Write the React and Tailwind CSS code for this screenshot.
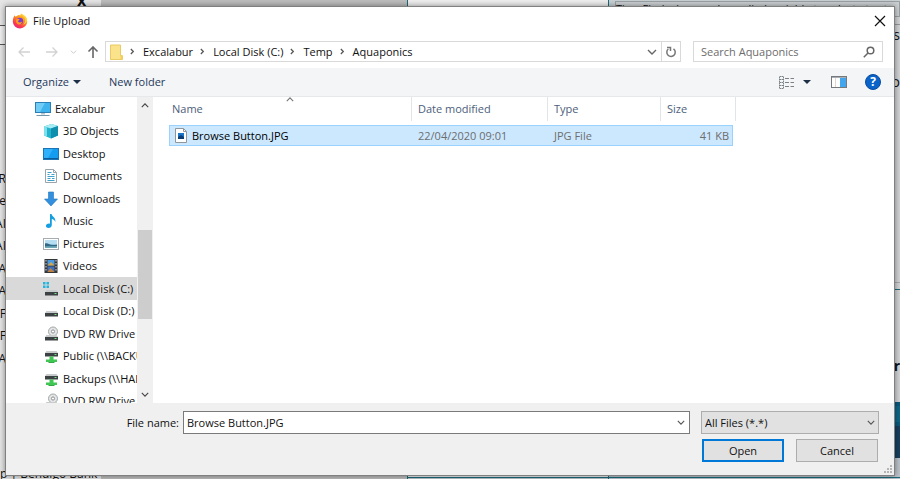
import { useState } from 'react';

const places = [
    { label: '3D Objects', icon: ObjectsIcon },
    { label: 'Desktop', icon: DesktopIcon },
    { label: 'Documents', icon: DocumentsIcon },
    { label: 'Downloads', icon: DownloadsIcon },
    { label: 'Music', icon: MusicIcon },
    { label: 'Pictures', icon: PicturesIcon },
    { label: 'Videos', icon: VideosIcon },
    { label: 'Local Disk (C:)', icon: SystemDiskIcon },
    { label: 'Local Disk (D:)', icon: DiskIcon },
    { label: 'DVD RW Drive (E:)', icon: DvdIcon },
    { label: 'Public (\\\\BACKUP)', icon: NetworkDriveIcon },
    { label: 'Backups (\\\\HAL)', icon: NetworkDriveIcon },
    { label: 'DVD RW Drive (F:)', icon: DvdIcon },
];

const crumbs = ['Excalabur', 'Local Disk (C:)', 'Temp', 'Aquaponics'];

const pageRows = ['R', 'e', 'AI', 'AI', 'A', 'A', 'AF', 'AF', 'A'];

function FirefoxIcon() {
    return (
        <svg viewBox="0 0 16 16" className="w-4 h-4">
            <defs>
                <linearGradient id="fox" x1="0.8" y1="0" x2="0.2" y2="1">
                    <stop offset="0" stopColor="#ffe03a" />
                    <stop offset="0.4" stopColor="#ff8a1c" />
                    <stop offset="0.75" stopColor="#fb3850" />
                    <stop offset="1" stopColor="#e0208a" />
                </linearGradient>
            </defs>
            <path d="M1.6 4.2 2.6 2.2l.8 1.5 1.5-.7C6 1.6 7.5 1.8 8.300 2.500L9 .5c1 .6 1.800 1.400 2.300 2.500l.5-.6c2 1.300 3.400 3.200 3.400 5.800a7.200 7.200 0 0 1-14.400.2c0-1.500.2-3 .8-4.200z" fill="url(#fox)" />
            <circle cx="7.800" cy="8" r="3.300" fill="#7a3bd0" />
            <path d="M4.200 6.200c1.200-.8 2.800-.5 3.600.3-.4.900-1.600.8-1.800 1.700.6 1.800 3.400 1.300 4.200.1-.1 2.400-2 3.500-3.700 3.100-2.200-.5-3.100-3.200-2.300-5.200z" fill="#ff9a1f" />
            <path d="M9.200.7c.5 2.200 3.600 2.600 4 6.300.1 2-1 4-2.400 4.800 3-.6 4.400-2.800 4.200-5.200C14.700 3.800 12 1.900 9.200.7z" fill="#ffd23a" />
        </svg>
    );
}

function Chevron({ className, d = 'M1 1l4 4 4-4' }) {
    return (
        <svg viewBox="0 0 10 6" className={className} fill="none" stroke="currentColor" strokeWidth="1.400">
            <path d={d} />
        </svg>
    );
}

function Arrow({ className, d, strokeWidth = 1.3 }) {
    return (
        <svg viewBox="0 0 12 12" className={className} fill="none" stroke="currentColor" strokeWidth={strokeWidth}>
            <path d={d} />
        </svg>
    );
}

function FolderIcon() {
    return (
        <svg viewBox="0 0 13 16" className="w-[13px] h-4">
            <path d="M.5 1h10v10.500l2 .5v3.500H.5z" fill="#fbe38b" stroke="#e9ca63" />
            <path d="M10.500 11v4.500h2V11z" fill="#f3cf5c" />
        </svg>
    );
}

function ComputerIcon() {
    return (
        <svg viewBox="0 0 16 16" className="w-4 h-4">
            <rect x=".5" y="1.500" width="15" height="10" fill="#3fb4ee" stroke="#2a7fb5" />
            <path d="M1 2h9L5 11H1z" fill="#72cdf6" />
            <path d="M6 12h4v1.500H6z" fill="#b5c5cf" />
            <path d="M1.500 14.500h13" stroke="#7295a8" />
        </svg>
    );
}

function ObjectsIcon() {
    return (
        <svg viewBox="0 0 16 16" className="w-4 h-4">
            <path d="M1 3.500 8.500 1 15 3v9.500L8 15.500l-7-3z" fill="#22b4cd" />
            <path d="M1 3.500 8.500 1 15 3 8 5.500z" fill="#a8ecf4" />
            <path d="M8 5.500 15 3v9.500l-7 3z" fill="#0f8fae" />
            <path d="M1 3.500l3 1v9.300l-3-1.300z" fill="#7fdfec" />
        </svg>
    );
}

function DesktopIcon() {
    return (
        <svg viewBox="0 0 16 16" className="w-4 h-4">
            <rect x=".5" y="2.500" width="15" height="11" fill="#149df0" stroke="#1b74b5" />
            <path d="M1 12.500h14" stroke="#0b5b99" />
            <path d="M1 3h9l-5 9H1z" fill="#2fb0fa" />
        </svg>
    );
}

function DocumentsIcon() {
    return (
        <svg viewBox="0 0 16 16" className="w-4 h-4">
            <path d="M2.500 1.500h8l3 3v10h-11z" fill="#fff" stroke="#9aa4aa" />
            <path d="M10.500 1.500v3h3" fill="none" stroke="#9aa4aa" />
            <path d="M4.500 4.500h4M4.500 6.500h2m2 0h3M4.500 8.500h7M4.500 10.500h3m1.500 0h2.500M4.500 12.500h7" stroke="#3fa0cc" />
        </svg>
    );
}

function DownloadsIcon() {
    return (
        <svg viewBox="0 0 16 16" className="w-4 h-4">
            <path d="M5.500 1h5v7h4L8 15 1.500 8h4z" fill="#3390df" stroke="#2374bd" strokeWidth=".6" />
        </svg>
    );
}

function MusicIcon() {
    return (
        <svg viewBox="0 0 16 16" className="w-4 h-4">
            <path d="M7 1h1.600c.3 2.700 4.400 3.300 3.800 8-.7-1.600-2-2.600-3.600-2.900V12c0 1.800-1.500 3-3.300 3S2.700 14 3 12.600C3.300 11 5.300 10.200 7 10.800z" fill="#169fe0" />
        </svg>
    );
}

function PicturesIcon() {
    return (
        <svg viewBox="0 0 16 16" className="w-4 h-4">
            <rect x=".5" y="2.500" width="15" height="11" fill="#fff" stroke="#a3adb3" />
            <rect x="2" y="4" width="12" height="8" fill="#b5def3" />
            <path d="M2 7.500c3-.7 4 1 7 1.300 2 .2 3.500-.3 5-.3V12H2z" fill="#2e6988" />
            <path d="M2 10.500c4-.8 8 .3 12-.4V12H2z" fill="#6fa9b8" />
        </svg>
    );
}

function VideosIcon() {
    return (
        <svg viewBox="0 0 16 16" className="w-4 h-4">
            <rect x="1.500" y="1" width="13" height="14" fill="#34373a" />
            <path d="M3 2v12M13 2v12" stroke="#dcdcdc" strokeDasharray="1.500 1.500" />
            <rect x="4.500" y="2" width="7" height="5.500" fill="#4b9be0" />
            <rect x="4.500" y="8.500" width="7" height="5.500" fill="#3d6fbd" />
            <path d="M4.500 7.500 8 4l3.500 3.500z" fill="#d7a548" />
            <path d="M4.500 14l3-4 4 4z" fill="#c07f3b" />
        </svg>
    );
}

function DriveBody({ y = 9 }) {
    return (
        <>
            <path d={`M3.500 ${y}h10l1.500 2H2z`} fill="#c7cbcc" />
            <rect x="2" y={y + 2} width="13" height="3.500" fill="#3c4143" />
            <rect x="11.500" y={y + 3} width="2" height="1" fill="#79e08a" />
        </>
    );
}

function SystemDiskIcon() {
    return (
        <svg viewBox="0 0 16 16" className="w-4 h-4">
            <path d="M0 1h2.500v2.500H0zM3.500 1H6v2.500H3.500zM0 4.500h2.500V7H0zM3.500 4.500H6V7H3.500z" fill="#23b5dd" />
            <DriveBody />
        </svg>
    );
}

function DiskIcon() {
    return (
        <svg viewBox="0 0 16 16" className="w-4 h-4">
            <DriveBody y={8} />
        </svg>
    );
}

function DvdIcon() {
    return (
        <svg viewBox="0 0 16 16" className="w-4 h-4">
            <circle cx="10" cy="5.500" r="4.500" fill="#e4e6e7" stroke="#a2a6a7" />
            <circle cx="10" cy="5.500" r="1.600" fill="#fff" stroke="#8c9091" />
            <DriveBody />
        </svg>
    );
}

function NetworkDriveIcon() {
    return (
        <svg viewBox="0 0 16 16" className="w-4 h-4">
            <DriveBody y={3} />
            <path d="M6.500 8.500h4v3h3.500V14H3v-2.500h3.500z" fill="#3fc653" />
            <path d="M5.500 14h6v1h-6z" fill="#35a548" />
        </svg>
    );
}

function ImageFileIcon() {
    return (
        <svg viewBox="0 0 12 15" className="w-3 h-[15px]">
            <path d="M.5.5h8l3 3v11H.5z" fill="#fff" stroke="#8f979c" />
            <path d="M8.500.5v3h3" fill="none" stroke="#8f979c" />
            <rect x="3" y="5" width="6" height="6" fill="#1874c7" />
            <path d="M3 9l3-2 3 2v2H3z" fill="#0b3d75" />
        </svg>
    );
}

function ViewIcon() {
    return (
        <svg viewBox="0 0 16 13" className="w-4 h-[13px]" fill="none" stroke="#7b8185">
            <path d="M.5.5h4v12h-4zM.5 3.500h4M.5 6.500h4M.5 9.500h4" strokeDasharray="1.500 .5" />
            <path d="M6 2.500h4M11.500 2.500H15M6 6.500h4M11.500 6.500H15M6 10.500h4M11.500 10.500H15" />
        </svg>
    );
}

function PreviewPaneIcon() {
    return (
        <svg viewBox="0 0 16 12" className="w-4 h-3">
            <rect x=".5" y=".5" width="15" height="11" fill="#fff" stroke="#75797c" />
            <path d="M1 1.500h14" stroke="#a9b0b5" />
            <path d="M4.500 2v9" stroke="#e4d6cc" />
            <rect x="9" y="2" width="6" height="9" fill="#42a5ee" />
        </svg>
    );
}

// Web page that shows around the edges of the dialog
function PageBehind() {
    return (
        <div className="col-start-1 row-start-1 flex overflow-hidden bg-[#d2d4d6]" aria-hidden="true">
            <div className="w-[101px] shrink-0 flex flex-col justify-between overflow-hidden bg-[#e6e6e6]">
                <div>
                    <div className="h-[26px] pl-[77px] text-base/[1px] font-bold border-b border-[#555]">x</div>
                    <div className="h-[19px] border-b border-[#555] bg-[#f0f0f0]" />
                    <div className="pt-[122px] w-1.5 text-xs whitespace-nowrap">
                        {pageRows.map((text, i) => (
                            <div key={i} className="h-[23px] even:h-[22px] flex items-center justify-end">
                                {text}
                            </div>
                        ))}
                    </div>
                </div>
                <div className="h-3.5 text-xs/4 whitespace-nowrap">p | Bendigo Bank</div>
            </div>
            <div className="w-[306px] shrink-0 bg-[#bdbdbd]" />
            <div className="w-[201px] shrink-0 border-l border-[#1a6b7c] bg-[#efefef] flex flex-col justify-end">
                <div className="h-[3px] border-t border-[#1a6b7c] bg-[#bcc3ca]" />
            </div>
            <div className="flex-1 min-w-0 flex flex-col border-l border-[#1a6b7c] text-right">
                <div className="h-[17px] overflow-hidden pl-1.5 pt-px bg-[#c9d1d5] text-left text-[11px]/[14px] whitespace-nowrap">
                    <div className="border border-[#9aa2a6] bg-[#cdd1d3]">Tips: Find a keyword supplied variable to select at set</div>
                </div>
                <div className="h-2 border-b border-[#999]" />
                <div className="h-5 text-sm/5">s</div>
                <div className="h-[238px] pt-[27px] text-sm/5 border-b border-[#aaa]">o</div>
                <div className="h-[7px] border-b border-[#1a6b7c]" />
                <div className="h-[112px] pt-[66px] text-sm/5 font-bold">r</div>
                <div className="h-6 bg-[#0d6787] border-y-4 border-[#0a5a7c]" />
                <div className="h-8 bg-[#173f5f]" />
                <div className="flex-1 bg-[#bcc3ca] flex flex-col justify-end">
                    <div className="h-[3px] border-t border-[#1a6b7c]" />
                </div>
            </div>
        </div>
    );
}

function Sidebar({ current, onSelect }) {
    return (
        <div className="w-[147px] shrink-0 flex">
            <nav className="w-[131px] h-[306px] overflow-hidden whitespace-nowrap" aria-label="Places">
                <button className="w-full h-[23px] pl-[29px] flex items-center gap-1">
                    <ComputerIcon />
                    Excalabur
                </button>
                {places.map(({ label, icon: Icon }) => (
                    <button
                        key={label}
                        onClick={() => onSelect(label)}
                        className={`w-full h-[23px] even:h-[22px] pl-[37px] flex items-center gap-1 overflow-hidden ${current === label ? 'bg-[#d9d9d9]' : ''}`}
                    >
                        <span className="shrink-0"><Icon /></span>
                        {label}
                    </button>
                ))}
            </nav>
            <div className="w-4 flex flex-col items-center bg-[#f0f0f0] text-[#444]">
                <button className="h-[17px] flex items-center" aria-label="Scroll up">
                    <Chevron className="w-2 h-[5px]" d="M1 5l4-4 4 4" />
                </button>
                <div className="mt-[116px] h-[89px] w-[14px] bg-[#cdcdcd]" />
                <button className="mt-auto h-[17px] flex items-center" aria-label="Scroll down">
                    <Chevron className="w-2 h-[5px]" />
                </button>
            </div>
        </div>
    );
}

function FileList() {
    const head = 'h-6 flex items-center border-r border-[#e2e5e8] pl-1.5';
    return (
        <div className="flex-1 pl-4">
            <table className="table-fixed w-[567px] border-separate border-spacing-0 text-[#6d6d6d]">
                <colgroup>
                    <col className="w-[243px]" />
                    <col className="w-[136px]" />
                    <col className="w-[113px]" />
                    <col className="w-[72px]" />
                    <col className="w-[3px]" />
                </colgroup>
                <thead className="text-left text-[#4c607a]">
                    <tr>
                        <th className="p-0 pb-1 font-normal">
                            <div className="relative h-6 flex items-center border-r border-[#e2e5e8] pl-[3px]">
                                Name
                                <Chevron className="absolute left-1/2 top-0 -translate-x-1/2 w-2 h-[5px] text-[#777]" d="M1 5l4-4 4 4" />
                            </div>
                        </th>
                        <th className="p-0 pb-1 font-normal"><div className={head}>Date modified</div></th>
                        <th className="p-0 pb-1 font-normal"><div className={head}>Type</div></th>
                        <th className="p-0 pb-1 font-normal" colSpan={2}><div className={head}>Size</div></th>
                    </tr>
                </thead>
                <tbody>
                    <tr className="h-[21px]">
                        <td className="p-0 pl-[5px] bg-[#cce8ff] border-y border-l border-[#99d1ff] text-black">
                            <div className="flex items-center gap-[5px]">
                                <ImageFileIcon />
                                Browse Button.JPG
                            </div>
                        </td>
                        <td className="p-0 pl-1.5 bg-[#cce8ff] border-y border-[#99d1ff]">22/04/2020 09:01</td>
                        <td className="p-0 pl-1.5 bg-[#cce8ff] border-y border-[#99d1ff]">JPG File</td>
                        <td className="p-0 pr-[3px] bg-[#cce8ff] border-y border-r border-[#99d1ff] text-right">41 KB</td>
                        <td className="p-0" />
                    </tr>
                </tbody>
            </table>
        </div>
    );
}

export default function App() {
    const [current, setCurrent] = useState('Local Disk (C:)');
    const [fileName, setFileName] = useState('Browse Button.JPG');

    return (
        <div className="grid min-h-screen overflow-hidden font-['Open_Sans','Noto_Sans',sans-serif] text-[11px]/4 text-[#111]">
            <PageBehind />

            <div role="dialog" aria-label="File Upload" className="col-start-1 row-start-1 mt-[6px] mx-[5px] mb-[4px] flex flex-col bg-white border border-[#808080] shadow-[0_0_6px_rgba(0,0,0,0.45)] z-10">
                {/* Title bar */}
                <div className="h-7 pl-1.5 pr-2 flex items-center gap-[5px]">
                    <FirefoxIcon />
                    <h1>File Upload</h1>
                    <button className="ml-auto" aria-label="Close">
                        <Arrow className="w-3 h-3" strokeWidth={1.2} d="M1 1l10 10M11 1L1 11" />
                    </button>
                </div>

                {/* Address bar */}
                <div className="h-[33px] pl-3 pr-[11px] flex items-center">
                    <button aria-label="Back" className="text-[#d2d2d2]"><Arrow className="w-3 h-3" d="M12 6H1M5.500 1.500 1 6l4.500 4.500" /></button>
                    <button aria-label="Forward" className="ml-4 text-[#d2d2d2]"><Arrow className="w-3 h-3" d="M0 6h11M6.500 1.500 11 6l-4.500 4.500" /></button>
                    <button aria-label="Recent locations" className="ml-3 text-[#c9c9c9]"><Chevron className="w-[7px] h-1" /></button>
                    <button aria-label="Up" className="ml-2.5 text-[#666]"><Arrow className="w-3 h-3" strokeWidth={1.6} d="M6 12V1M1.500 5.500 6 1l4.500 4.500" /></button>
                    <div className="ml-1.5 flex-1 h-[21px] flex items-center border border-[#d9d9d9]">
                        <div className="pl-1 flex items-center">
                            <FolderIcon />
                            {crumbs.map(crumb => (
                                <span key={crumb} className="flex items-center">
                                    <svg viewBox="0 0 6 8" className="ml-[7px] mr-2 w-[5px] h-[7px]" fill="none" stroke="#555" strokeWidth="1.500">
                                        <path d="M1 1l3 3-3 3" />
                                    </svg>
                                    <button>{crumb}</button>
                                </span>
                            ))}
                        </div>
                        <button aria-label="Previous locations" className="ml-auto mr-1 text-[#666]"><Chevron className="w-[10px] h-1.5" /></button>
                        <button aria-label="Refresh" className="w-[19px] h-full flex items-center justify-center border-l border-[#d9d9d9]">
                            <svg viewBox="0 0 12 12" className="w-3 h-3" fill="none" stroke="#777" strokeWidth="1.500">
                                <path d="M8.500 2.800A4.200 4.200 0 1 1 3.300 3" />
                                <path d="M2 1.500h3.500V5" />
                            </svg>
                        </button>
                    </div>
                    <label className="ml-3 w-[190px] h-[21px] px-[7px] flex items-center border border-[#d9d9d9]">
                        <input aria-label="Search Aquaponics" placeholder="Search Aquaponics" className="flex-1 min-w-0 outline-none placeholder:text-[#6d6d6d]" />
                        <svg viewBox="0 0 12 12" className="w-3 h-3" fill="none" stroke="#666" strokeWidth="1.500">
                            <circle cx="7.500" cy="4.500" r="3.300" />
                            <path d="M5 7 .8 11.200" />
                        </svg>
                    </label>
                </div>

                {/* Command bar */}
                <div className="h-[29px] pl-[17px] pr-[13px] flex items-center bg-[#f4f5f7] border-b border-[#e6e8eb] text-[#1e395b]">
                    <button className="flex items-center gap-1">
                        Organize
                        <svg viewBox="0 0 8 4" className="w-2 h-1"><path d="M0 0h8L4 4z" fill="#1e2f48" /></svg>
                    </button>
                    <button className="ml-7">New folder</button>
                    <button className="ml-auto flex items-center gap-2" aria-label="Change view">
                        <ViewIcon />
                        <svg viewBox="0 0 8 4" className="w-2 h-1"><path d="M0 0h8L4 4z" fill="#1e2f48" /></svg>
                    </button>
                    <button className="ml-5" aria-label="Show the preview pane"><PreviewPaneIcon /></button>
                    <button className="ml-[18px] w-4 h-4 rounded-full bg-[#0a63c9] border border-[#0a4c9e] text-white text-xs/3 font-bold flex items-center justify-center" aria-label="Help">?</button>
                </div>

                <div className="flex-1 flex">
                    <Sidebar current={current} onSelect={setCurrent} />
                    <FileList />
                </div>

                {/* Footer */}
                <div className="relative h-[72px] pt-2 pr-[15px] bg-[#f0f0f0] flex flex-col gap-[5px]">
                    <div className="flex items-center">
                        <label htmlFor="file-name" className="w-[177px] pr-1 text-right">File name:</label>
                        <div className="flex-1 h-[23px] flex items-center border border-[#7a7a7a] bg-white">
                            <input id="file-name" value={fileName} onChange={e => setFileName(e.target.value)} className="flex-1 min-w-0 pl-[3px] outline-none" />
                            <button aria-label="Recent file names" className="mr-1 text-[#555]"><Chevron className="w-2 h-[5px]" /></button>
                        </div>
                        <div className="relative ml-[11px] w-[178px]">
                            <select aria-label="File type" className="w-full h-[23px] pl-[3px] appearance-none bg-[#e1e1e1] border border-[#adadad] outline-none">
                                <option>All Files (*.*)</option>
                            </select>
                            <Chevron className="absolute right-1 top-[9px] w-2 h-[5px] text-[#555] pointer-events-none" />
                        </div>
                    </div>
                    <div className="flex justify-end gap-3 pr-px">
                        <button className="w-[82px] h-[23px] bg-[#e1e1e1] border-2 border-[#0078d7]">Open</button>
                        <button className="w-[82px] h-[23px] bg-[#e1e1e1] border border-[#adadad]">Cancel</button>
                    </div>
                    <svg viewBox="0 0 8 8" className="absolute right-0.5 bottom-0.5 w-2 h-2" fill="#b5b5b5">
                        <path d="M6 0h2v2H6zM3 3h2v2H3zM6 3h2v2H6zM0 6h2v2H0zM3 6h2v2H3zM6 6h2v2H6z" />
                    </svg>
                </div>
            </div>
        </div>
    );
}
